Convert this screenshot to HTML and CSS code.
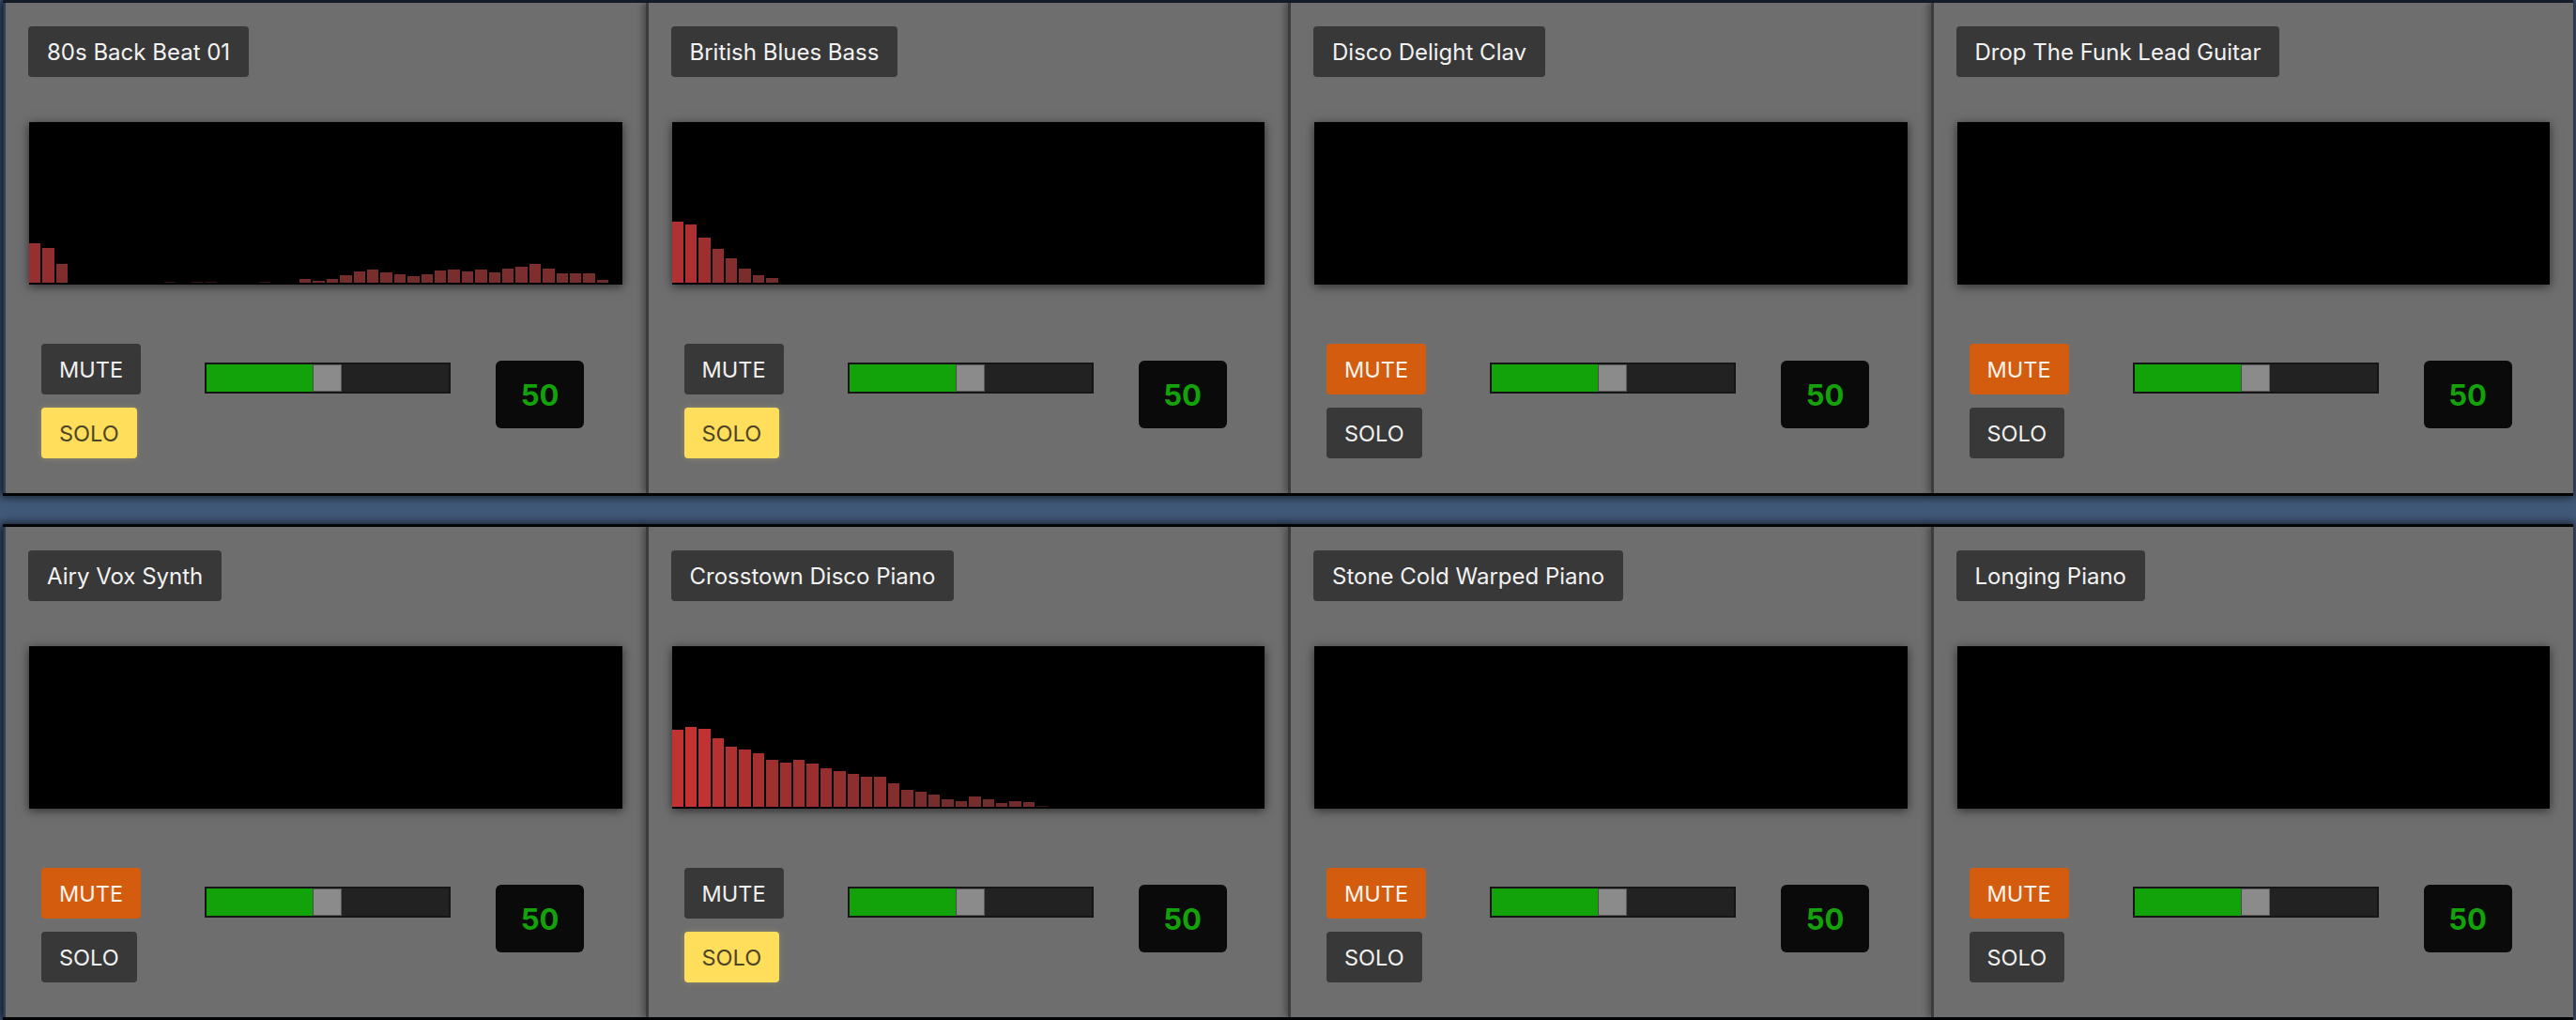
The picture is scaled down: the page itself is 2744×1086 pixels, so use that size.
FILE: index.html
```html
<!DOCTYPE html>
<html>
<head>
<meta charset="utf-8">
<link rel="stylesheet" href="styles.css">
</head>
<body>
<div class="app">
  <div class="row">
    <div class="card">
      <div class="title">80s Back Beat 01</div>
      <div class="display">
        <div class="bars">
          <i style="height:42px;background:rgb(150,47,47)"></i><i style="height:37px;background:rgb(145,47,47)"></i><i style="height:20px;background:rgb(127,45,45)"></i><i></i><i></i><i></i><i></i><i></i><i></i><i></i><i style="height:1px;background:rgb(50,18,18)"></i><i></i><i style="height:1px;background:rgb(50,18,18)"></i><i style="height:1px;background:rgb(50,18,18)"></i><i></i><i></i><i></i><i style="height:1px;background:rgb(50,18,18)"></i><i></i><i></i><i style="height:4px;background:rgb(110,44,44)"></i><i style="height:2.5px;background:rgb(109,44,44)"></i><i style="height:4px;background:rgb(110,44,44)"></i><i style="height:8px;background:rgb(114,45,45)"></i><i style="height:12px;background:rgb(119,45,45)"></i><i style="height:14px;background:rgb(121,45,45)"></i><i style="height:11px;background:rgb(118,45,45)"></i><i style="height:9px;background:rgb(116,45,45)"></i><i style="height:7px;background:rgb(113,44,44)"></i><i style="height:9px;background:rgb(116,45,45)"></i><i style="height:13px;background:rgb(120,45,45)"></i><i style="height:14px;background:rgb(121,45,45)"></i><i style="height:12px;background:rgb(119,45,45)"></i><i style="height:14px;background:rgb(121,45,45)"></i><i style="height:11px;background:rgb(118,45,45)"></i><i style="height:15px;background:rgb(122,45,45)"></i><i style="height:17px;background:rgb(124,45,45)"></i><i style="height:20px;background:rgb(127,45,45)"></i><i style="height:15px;background:rgb(122,45,45)"></i><i style="height:10px;background:rgb(117,45,45)"></i><i style="height:10px;background:rgb(117,45,45)"></i><i style="height:10px;background:rgb(117,45,45)"></i><i style="height:3px;background:rgb(109,44,44)"></i>
        </div>
      </div>
      <div class="controls">
        <div class="btns">
          <div class="btn">MUTE</div>
          <div class="btn solo-on">SOLO</div>
        </div>
        <div class="slider"><div class="fill" style="width:50%"></div><div class="thumb"></div></div>
        <div class="value">50</div>
      </div>
    </div>
    <div class="card">
      <div class="title">British Blues Bass</div>
      <div class="display">
        <div class="bars">
          <i style="height:65px;background:rgb(175,49,49)"></i><i style="height:62px;background:rgb(172,48,48)"></i><i style="height:48px;background:rgb(157,47,47)"></i><i style="height:36px;background:rgb(144,47,47)"></i><i style="height:26px;background:rgb(134,46,46)"></i><i style="height:15px;background:rgb(122,45,45)"></i><i style="height:8px;background:rgb(114,45,45)"></i><i style="height:5px;background:rgb(111,44,44)"></i>
        </div>
      </div>
      <div class="controls">
        <div class="btns">
          <div class="btn">MUTE</div>
          <div class="btn solo-on">SOLO</div>
        </div>
        <div class="slider"><div class="fill" style="width:50%"></div><div class="thumb"></div></div>
        <div class="value">50</div>
      </div>
    </div>
    <div class="card">
      <div class="title">Disco Delight Clav</div>
      <div class="display"><div class="bars"></div></div>
      <div class="controls">
        <div class="btns">
          <div class="btn mute-on">MUTE</div>
          <div class="btn">SOLO</div>
        </div>
        <div class="slider"><div class="fill" style="width:50%"></div><div class="thumb"></div></div>
        <div class="value">50</div>
      </div>
    </div>
    <div class="card">
      <div class="title">Drop The Funk Lead Guitar</div>
      <div class="display"><div class="bars"></div></div>
      <div class="controls">
        <div class="btns">
          <div class="btn mute-on">MUTE</div>
          <div class="btn">SOLO</div>
        </div>
        <div class="slider"><div class="fill" style="width:50%"></div><div class="thumb"></div></div>
        <div class="value">50</div>
      </div>
    </div>
  </div>
  <div class="row">
    <div class="card">
      <div class="title">Airy Vox Synth</div>
      <div class="display"><div class="bars"></div></div>
      <div class="controls">
        <div class="btns">
          <div class="btn mute-on">MUTE</div>
          <div class="btn">SOLO</div>
        </div>
        <div class="slider"><div class="fill" style="width:50%"></div><div class="thumb"></div></div>
        <div class="value">50</div>
      </div>
    </div>
    <div class="card">
      <div class="title">Crosstown Disco Piano</div>
      <div class="display">
        <div class="bars">
          <i style="height:82px;background:rgb(193,50,50)"></i><i style="height:85px;background:rgb(196,50,50)"></i><i style="height:83px;background:rgb(194,50,50)"></i><i style="height:73px;background:rgb(183,49,49)"></i><i style="height:64px;background:rgb(174,49,49)"></i><i style="height:61px;background:rgb(171,48,48)"></i><i style="height:57px;background:rgb(166,48,48)"></i><i style="height:50px;background:rgb(159,48,48)"></i><i style="height:47px;background:rgb(156,47,47)"></i><i style="height:50px;background:rgb(159,48,48)"></i><i style="height:46px;background:rgb(155,47,47)"></i><i style="height:41px;background:rgb(149,47,47)"></i><i style="height:38px;background:rgb(146,47,47)"></i><i style="height:35px;background:rgb(143,46,46)"></i><i style="height:32px;background:rgb(140,46,46)"></i><i style="height:32px;background:rgb(140,46,46)"></i><i style="height:25px;background:rgb(132,46,46)"></i><i style="height:18px;background:rgb(125,45,45)"></i><i style="height:16px;background:rgb(123,45,45)"></i><i style="height:13px;background:rgb(120,45,45)"></i><i style="height:8px;background:rgb(114,45,45)"></i><i style="height:6px;background:rgb(112,44,44)"></i><i style="height:11px;background:rgb(118,45,45)"></i><i style="height:8px;background:rgb(114,45,45)"></i><i style="height:4px;background:rgb(110,44,44)"></i><i style="height:6px;background:rgb(112,44,44)"></i><i style="height:5px;background:rgb(111,44,44)"></i><i style="height:1.5px;background:rgb(55,20,20)"></i>
        </div>
      </div>
      <div class="controls">
        <div class="btns">
          <div class="btn">MUTE</div>
          <div class="btn solo-on">SOLO</div>
        </div>
        <div class="slider"><div class="fill" style="width:50%"></div><div class="thumb"></div></div>
        <div class="value">50</div>
      </div>
    </div>
    <div class="card">
      <div class="title">Stone Cold Warped Piano</div>
      <div class="display"><div class="bars"></div></div>
      <div class="controls">
        <div class="btns">
          <div class="btn mute-on">MUTE</div>
          <div class="btn">SOLO</div>
        </div>
        <div class="slider"><div class="fill" style="width:50%"></div><div class="thumb"></div></div>
        <div class="value">50</div>
      </div>
    </div>
    <div class="card">
      <div class="title">Longing Piano</div>
      <div class="display"><div class="bars"></div></div>
      <div class="controls">
        <div class="btns">
          <div class="btn mute-on">MUTE</div>
          <div class="btn">SOLO</div>
        </div>
        <div class="slider"><div class="fill" style="width:50%"></div><div class="thumb"></div></div>
        <div class="value">50</div>
      </div>
    </div>
  </div>
</div>
</body>
</html>
```
FILE: styles.css
```css
* { box-sizing: border-box; }
html, body { margin: 0; padding: 0; }
body {
  background: #415979;
  font-family: Inter, "Noto Sans", sans-serif;
  width: 2744px;
  height: 1086px;
  overflow: hidden;
}
.app {
  display: flex;
  flex-direction: column;
  gap: 30px;
  padding: 0 3px 0 3px;
  height: 1086px;
}
.row {
  display: grid;
  grid-template-columns: repeat(4, 1fr);
  height: 528px;
  border-top: 3px solid rgba(0, 0, 0, 0.92);
  border-bottom: 3px solid rgba(0, 0, 0, 0.95);
  box-shadow: 0 0 9px 2px rgba(0, 0, 0, 0.55);
}
.row:first-child {
  border-top-color: rgba(8, 12, 20, 0.75);
}
.card {
  background: #6e6e6e;
  border-left: 3px solid rgba(0, 0, 0, 0.45);
  box-shadow: -3px 0 7px rgba(0, 0, 0, 0.35);
  padding: 25px 24px 0 24px;
  display: flex;
  flex-direction: column;
  align-items: flex-start;
  min-width: 0;
}
.card:first-child {
  background-clip: padding-box;
  border-left-color: rgba(0, 0, 0, 0.25);
}
.title {
  height: 54px;
  padding: 0 20px;
  display: flex;
  align-items: center;
  background: #383838;
  color: #f2f2f2;
  font-size: 24px;
  border-radius: 4px;
  white-space: nowrap;
}
.display {
  align-self: stretch;
  margin: 48px 1px 0 1px;
  height: 173px;
  background: #000;
  box-shadow: 0 2px 10px rgba(0, 0, 0, 0.6);
  padding-bottom: 2px;
  display: flex;
}
.bars {
  flex: 1;
  display: grid;
  grid-template-columns: repeat(44, 1fr);
  column-gap: 2px;
  align-items: end;
}
.bars i {
  display: block;
  height: 0;
}
.controls {
  display: flex;
  align-items: flex-start;
  margin-top: 63px;
  margin-left: 14px;
}
.btns {
  width: 108px;
  display: flex;
  flex-direction: column;
  align-items: flex-start;
  gap: 14px;
}
.btn {
  height: 54px;
  padding: 0 19px;
  display: flex;
  align-items: center;
  background: #383838;
  color: #f0f0f0;
  font-size: 23.5px;
  border-radius: 4px;
}
.btn.mute-on {
  background: #d45c0f;
  color: #fbf3ec;
}
.btn.solo-on {
  background: #ffde5b;
  color: #4d4526;
  box-shadow: 0 0 6px rgba(255, 222, 91, 0.25);
}
.slider {
  position: relative;
  margin-left: 66px;
  margin-top: 20px;
  width: 262px;
  height: 33px;
  background: #222;
  border: 2px solid #161616;
}
.fill {
  height: 100%;
  background: #12a20a;
}
.thumb {
  position: absolute;
  top: 0;
  bottom: 0;
  left: calc(50% - 16px);
  width: 31px;
  background: #8b8b8b;
  border: 1px solid #5a5a5a;
  border-left-color: #4a4a4a;
}
.value {
  margin-left: 48px;
  margin-top: 18px;
  width: 94px;
  height: 72px;
  background: #0a0a0a;
  border-radius: 6px;
  display: flex;
  align-items: center;
  justify-content: center;
  color: #14a20b;
  font-size: 31px;
  font-weight: 700;
}
```
